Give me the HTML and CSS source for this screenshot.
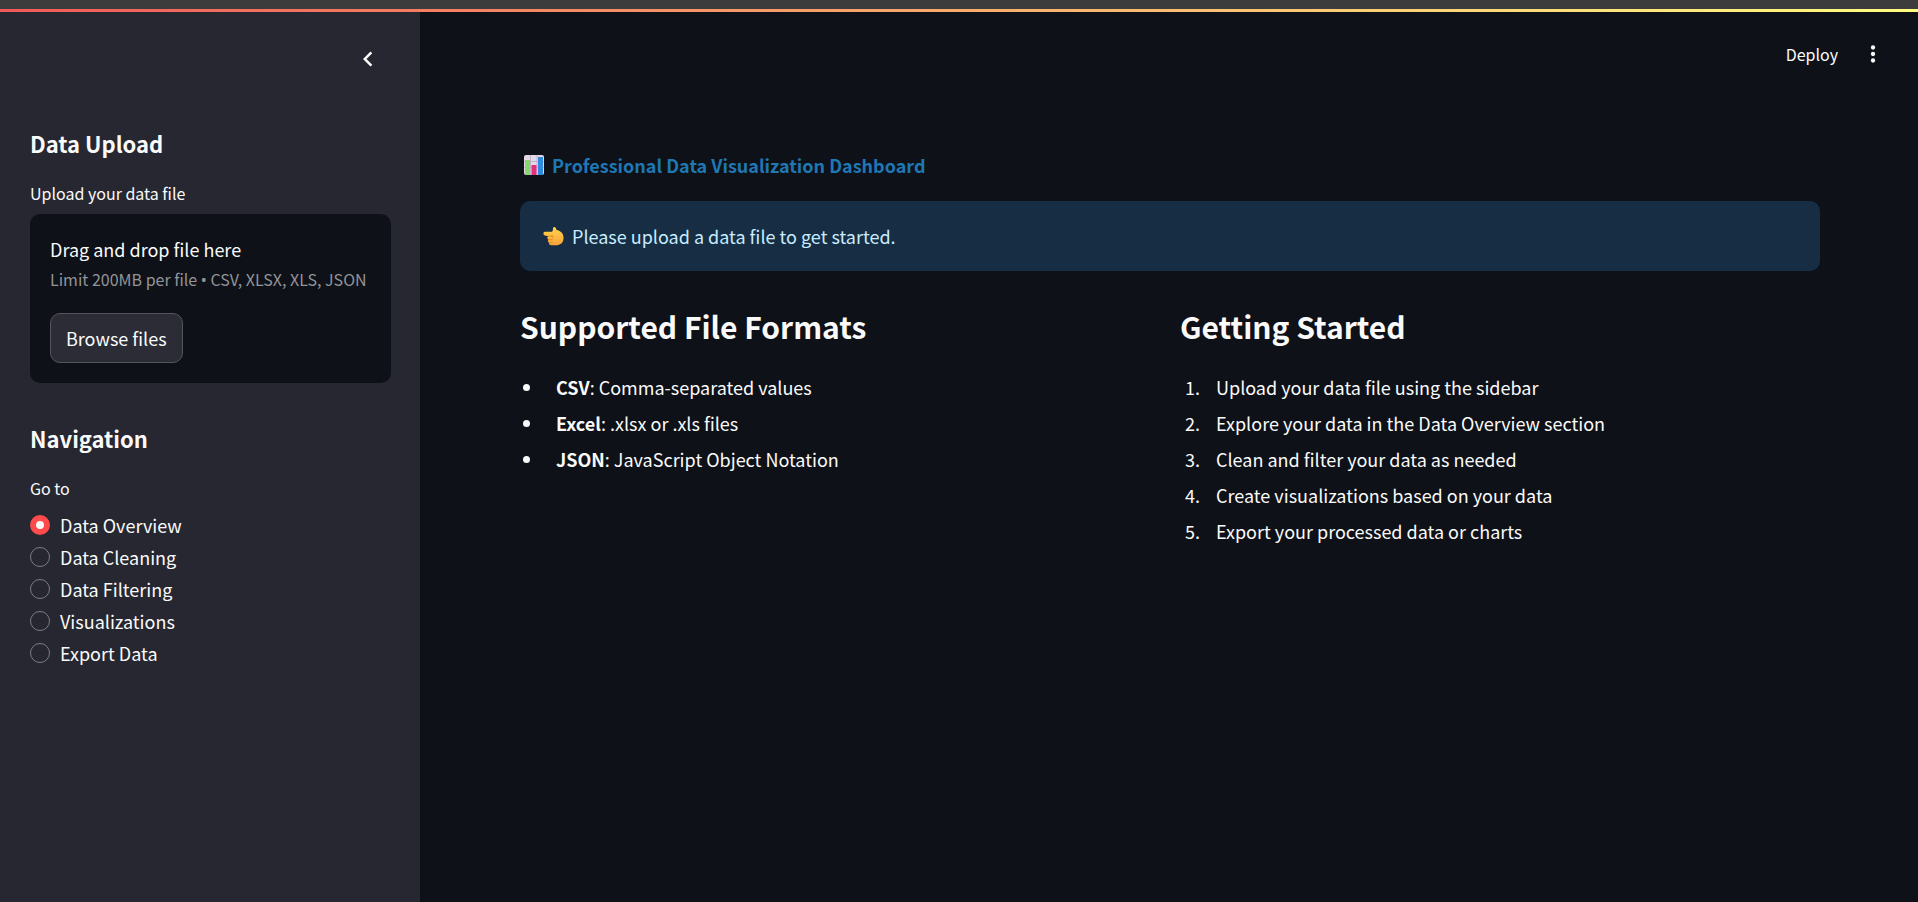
FILE: index.html
```html
<!DOCTYPE html>
<html lang="en">
<head>
<meta charset="utf-8">
<title>Professional Data Visualization Dashboard</title>
<link rel="stylesheet" href="styles.css">
</head>
<body>
<div class="window-edge"></div>
<div class="decoration"></div>
<div class="app">
  <aside class="sidebar">
    <div class="sidebar-header">
      <button class="icon-button" type="button" aria-label="Collapse sidebar">
        <svg class="icon icon-large" viewBox="0 0 24 24" aria-hidden="true"><path d="M15.41 7.41 14 6l-6 6 6 6 1.41-1.41L10.83 12z" fill="currentColor"/></svg>
      </button>
    </div>
    <section class="panel">
      <h2 class="panel-title">Data Upload</h2>
      <label class="field-label" for="browse">Upload your data file</label>
      <div class="dropzone">
        <p class="dropzone-title">Drag and drop file here</p>
        <p class="dropzone-hint">Limit 200MB per file <span class="separator">•</span> CSV, XLSX, XLS, JSON</p>
        <button class="browse" id="browse" type="button">Browse files</button>
      </div>
    </section>
    <section class="panel">
      <h2 class="panel-title">Navigation</h2>
      <fieldset class="radio-group">
        <legend class="field-label">Go to</legend>
        <label class="radio"><input type="radio" name="page" checked>Data Overview</label>
        <label class="radio"><input type="radio" name="page">Data Cleaning</label>
        <label class="radio"><input type="radio" name="page">Data Filtering</label>
        <label class="radio"><input type="radio" name="page">Visualizations</label>
        <label class="radio"><input type="radio" name="page">Export Data</label>
      </fieldset>
    </section>
  </aside>
  <div class="main">
    <header class="toolbar">
      <button class="deploy" type="button">Deploy</button>
      <button class="icon-button" type="button" aria-label="Main menu">
        <svg class="icon" viewBox="0 0 24 24" aria-hidden="true"><g fill="currentColor"><circle cx="12" cy="6" r="2"/><circle cx="12" cy="12" r="2"/><circle cx="12" cy="18" r="2"/></g></svg>
      </button>
    </header>
    <main class="content">
      <h1 class="title">
        <svg class="emoji" viewBox="0 0 20 20" aria-hidden="true">
          <rect width="20" height="20" rx="2" fill="#e3d8e8"/>
          <path d="M0 6.500h20M0 12.500h20M6.500 0v20M13 0v20" stroke="#bdaac9" stroke-width=".8"/>
          <rect x="1" y="5" width="5" height="15" fill="#86d66c"/>
          <rect x="7.500" y="10" width="5" height="10" fill="#e2307c"/>
          <rect x="14" y="2" width="5" height="18" fill="#2f8be0"/>
        </svg>
        Professional Data Visualization Dashboard
      </h1>
      <div class="alert" role="alert">
        <svg class="emoji hand" viewBox="0 0 22 20" aria-hidden="true">
          <defs><linearGradient id="skin" x1="0" y1="0" x2="0" y2="1"><stop offset="0" stop-color="#ffd54a"/><stop offset="1" stop-color="#f9a33c"/></linearGradient></defs>
          <path d="M2 5.500H9.500C11 4 10 1.500 11 .8c1.500-1 3 .6 3.200 3 3.500.7 7.300 3 7.300 8.200 0 5-3.500 7.700-8 7.700H9c-2.500 0-3-1.500-2.400-2.700-1.500-.5-1.800-2-.9-3.200-1.400-.7-1.600-2.600-.3-3.600L2 9.500C0 9.400-.1 5.600 2 5.500z" fill="url(#skin)"/>
          <path d="M5.500 10.200h4.300M5.800 13.800h4M6.800 17h3M9.600 9.500c1.200 1 1.200 2 0 3" stroke="#e08a20" stroke-width=".9" fill="none" stroke-linecap="round"/>
        </svg>
        Please upload a data file to get started.
      </div>
      <div class="columns">
        <section>
          <h2 class="section-title">Supported File Formats</h2>
          <ul class="list">
            <li><strong>CSV</strong>: Comma-separated values</li>
            <li><strong>Excel</strong>: .xlsx or .xls files</li>
            <li><strong>JSON</strong>: JavaScript Object Notation</li>
          </ul>
        </section>
        <section>
          <h2 class="section-title">Getting Started</h2>
          <ol class="list">
            <li>Upload your data file using the sidebar</li>
            <li>Explore your data in the Data Overview section</li>
            <li>Clean and filter your data as needed</li>
            <li>Create visualizations based on your data</li>
            <li>Export your processed data or charts</li>
          </ol>
        </section>
      </div>
    </main>
  </div>
</div>
</body>
</html>
```
FILE: styles.css
```css
* { box-sizing: border-box; }

body {
  margin: 0;
  min-height: 100vh;
  display: flex;
  flex-direction: column;
  background: #0e1117;
  color: #fafafa;
  font-family: "Noto Sans CJK SC", "Noto Sans", sans-serif;
  font-size: 18px;
  line-height: 32px;
}

h1, h2, p { margin: 0; }

button {
  font: inherit;
  color: inherit;
  background: none;
  border: 0;
  padding: 0;
  cursor: pointer;
}

.window-edge { height: 9px; background: #3c3c3c; }
.decoration { height: 3px; background: linear-gradient(90deg, #f15a59, #fffd80); }

.app { flex: 1; display: flex; }

.sidebar {
  flex: 0 0 420px;
  padding: 30px 29px 30px 30px;
  background: #262730;
}

.sidebar-header {
  display: flex;
  justify-content: flex-end;
  padding-right: 6px;
  margin-bottom: 52px;
}

.icon-button { display: flex; padding: 2px; }
.icon { width: 26px; height: 26px; }
.icon-large { width: 30px; height: 30px; }

.panel { margin-bottom: 40px; }

.panel-title { font-size: 22px; line-height: 30px; margin-bottom: 21px; }

.field-label {
  display: block;
  padding: 0;
  font-size: 16px;
  line-height: 28px;
  margin-bottom: 7px;
}

.dropzone {
  padding: 19px 20px 20px;
  background: #0e1117;
  border-radius: 10px;
}

.dropzone-hint {
  font-size: 16px;
  line-height: 28px;
  color: #939497;
  margin-bottom: 20px;
}

.separator { font-family: "Noto Sans", sans-serif; line-height: 1; }

.browse {
  display: block;
  height: 50px;
  padding: 0 15px;
  background: #2b2c36;
  border: 1px solid #53545c;
  border-radius: 10px;
}

.radio-group { border: 0; margin: 0; padding: 0; }

.radio { display: flex; align-items: center; gap: 10px; }

.radio input {
  appearance: none;
  width: 20px;
  height: 20px;
  margin: 0;
  border: 1px solid #7c7d84;
  border-radius: 50%;
  background: #262730;
}

.radio input:checked { border: 6px solid #ff4b4b; background: #fafafa; }

.main { flex: 1; }

.toolbar {
  display: flex;
  justify-content: flex-end;
  align-items: center;
  gap: 20px;
  padding: 26px 30px 0 0;
}

.deploy { font-size: 16px; }

.content { padding: 79px 98px 40px 100px; }

.title {
  display: flex;
  align-items: center;
  gap: 8px;
  padding-left: 4px;
  font-size: 18px;
  line-height: 32px;
  color: #1f77b4;
  margin-bottom: 20px;
}

.emoji { width: 20px; height: 20px; }

.alert {
  display: flex;
  align-items: center;
  gap: 8px;
  padding: 19px 23px;
  margin-bottom: 32px;
  background: #172d43;
  border-radius: 10px;
  color: #c7ebff;
}

.hand { width: 21px; }

.columns { display: grid; grid-template-columns: 1fr 1fr; gap: 20px; }

.section-title { font-size: 30px; line-height: 46px; margin-bottom: 22px; }

.list { margin: 0; padding: 0; }

.list li { margin: 0 0 4px 24px; padding-left: 12px; }
```
